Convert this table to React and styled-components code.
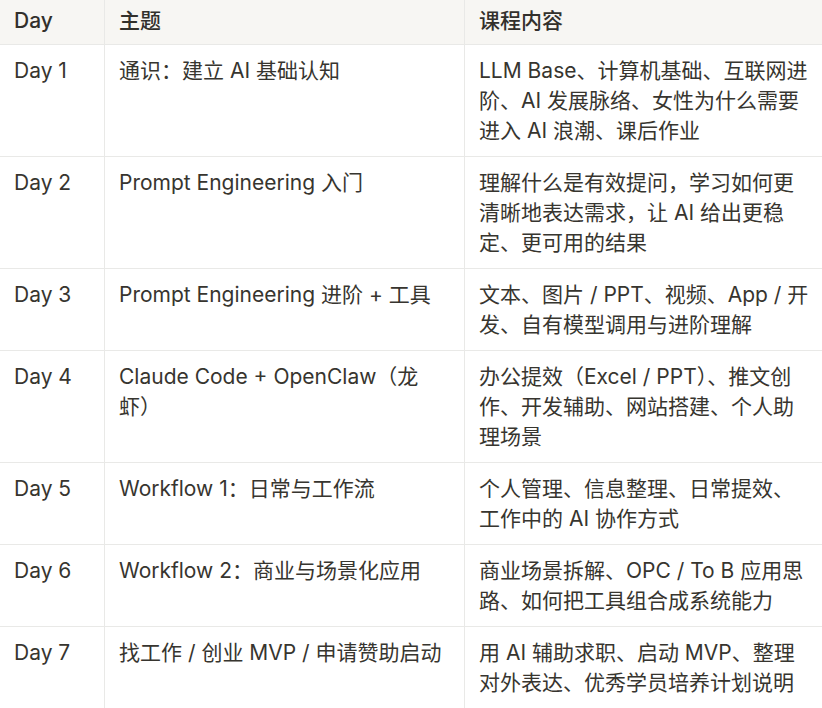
import styled, { createGlobalStyle } from 'styled-components';

const GlobalStyle = createGlobalStyle`
  html, body {
    margin: 0;
    padding: 0;
    background: #ffffff;
  }

  * {
    box-sizing: border-box;
  }
`;

const columns = ['Day', '主题', '课程内容'];

const rows = [
  {
    day: 'Day 1',
    topic: ['通识：建立 AI 基础认知'],
    content: ['LLM Base、计算机基础、互联网进', '阶、AI 发展脉络、女性为什么需要', '进入 AI 浪潮、课后作业'],
  },
  {
    day: 'Day 2',
    topic: ['Prompt Engineering 入门'],
    content: ['理解什么是有效提问，学习如何更', '清晰地表达需求，让 AI 给出更稳', '定、更可用的结果'],
  },
  {
    day: 'Day 3',
    topic: ['Prompt Engineering 进阶 + 工具'],
    content: ['文本、图片 / PPT、视频、App / 开', '发、自有模型调用与进阶理解'],
  },
  {
    day: 'Day 4',
    topic: ['Claude Code + OpenClaw（龙', '虾）'],
    content: ['办公提效（Excel / PPT）、推文创', '作、开发辅助、网站搭建、个人助', '理场景'],
  },
  {
    day: 'Day 5',
    topic: ['Workflow 1：日常与工作流'],
    content: ['个人管理、信息整理、日常提效、', '工作中的 AI 协作方式'],
  },
  {
    day: 'Day 6',
    topic: ['Workflow 2：商业与场景化应用'],
    content: ['商业场景拆解、OPC / To B 应用思', '路、如何把工具组合成系统能力'],
  },
  {
    day: 'Day 7',
    topic: ['找工作 / 创业 MVP / 申请赞助启动'],
    content: ['用 AI 辅助求职、启动 MVP、整理', '对外表达、优秀学员培养计划说明'],
  },
];

function App({ className }) {
  return (
    <div className={className}>
      <GlobalStyle />
      <Table>
        {columns.map((title, i) => (
          <HeadCell key={title} $last={i === columns.length - 1}>
            {title}
          </HeadCell>
        ))}
        {rows.map((row) => (
          <Row key={row.day}>
            <Cell>{row.day}</Cell>
            <Cell>
              {row.topic.map((line) => (
                <Line key={line}>{line}</Line>
              ))}
            </Cell>
            <Cell $last>
              {row.content.map((line) => (
                <Line key={line}>{line}</Line>
              ))}
            </Cell>
          </Row>
        ))}
      </Table>
    </div>
  );
}

const Table = styled.div`
  display: grid;
  grid-template-columns: 105px 360px 1fr;
  width: 822px;
  font-family: Inter, 'Noto Sans CJK SC', sans-serif;
  font-size: 21px;
  line-height: 30px;
  color: #37352f;
`;

const Row = styled.div`
  display: contents;
`;

const Cell = styled.div`
  padding: 11px 14px 10px 14px;
  border-bottom: 1px solid #e9e9e7;
  border-right: ${(p) => (p.$last ? 'none' : '1px solid #e9e9e7')};
  white-space: nowrap;
  overflow: hidden;
`;

const HeadCell = styled(Cell)`
  padding-top: 6px;
  padding-bottom: 8px;
  background: #f7f6f3;
  font-weight: 500;
  color: #32302c;
`;

const Line = styled.span`
  display: block;
`;

const StyledApp = styled(App)`
  width: 822px;
  height: 708px;
  overflow: hidden;
  background: #ffffff;
`;

export default StyledApp;
